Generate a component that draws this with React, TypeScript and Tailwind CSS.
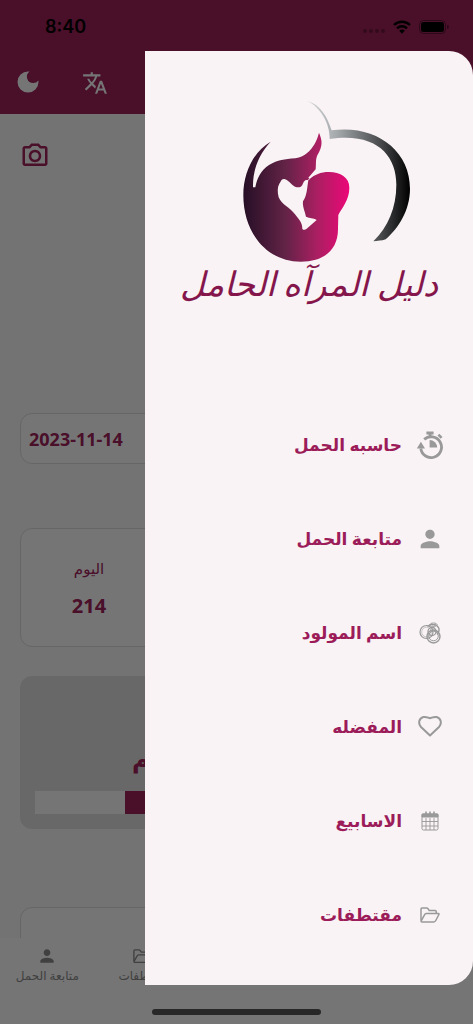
import React from "react";
import {
  MdDarkMode,
  MdOutlinePhotoCamera,
  MdPerson,
  MdTranslate,
} from "react-icons/md";

type IconProps = {
  className?: string;
};

type MenuItem = {
  label: string;
  icon: React.ReactNode;
};

function StopwatchIcon({ className }: IconProps) {
  return (
    <svg viewBox="0 0 26 28" className={className} fill="none" stroke="currentColor">
      <path d="M9.4 2h7.2M13 2v4" strokeWidth="2.8" />
      <path d="M21.4 3.6l3.2 3.2" strokeWidth="2.6" />
      <path d="M7.2 8.4A10.4 10.4 0 1 1 3.8 17.5" strokeWidth="2.8" />
      <path d="M-.2 17.6L3.9 10.8l4.1 6.8z" fill="currentColor" stroke="none" />
      <path d="M12.6 9v7.6h7.6a7.6 7.6 0 0 0-7.6-7.6z" fill="currentColor" stroke="none" />
    </svg>
  );
}

function RingsIcon({ className }: IconProps) {
  return (
    <svg viewBox="0 0 22 22" className={className} fill="none" stroke="currentColor">
      <circle cx="7.5" cy="10" r="6.5" strokeWidth="1.2" />
      <circle cx="7.5" cy="10" r="4.8" strokeWidth=".5" />
      <circle cx="14.5" cy="14.5" r="6.5" strokeWidth="1.4" />
      <circle cx="14.5" cy="14" r="4.8" />
      <path d="M8.5 4.5A7 7 0 0 1 20 6.5a7 7 0 0 1-2 6" strokeWidth="1.3" />
      <circle cx="13" cy="9.5" r="4" strokeWidth="1.3" />
      <path d="M10.5 3l2-2h4l2 2-4 2.5zM12.5 1l2 4 2-4" strokeWidth=".8" />
    </svg>
  );
}

function HeartIcon({ className }: IconProps) {
  return (
    <svg viewBox="0 0 24 24" className={className} fill="none" stroke="currentColor">
      <path
        d="M12 20.5L3 12C-.2 8.5 1 3 5.4 2 8.4 1.4 10.4 3 12 3.2 13.6 3 15.6 1.4 18.6 2 23 3 24.2 8.5 21 12z"
        strokeWidth="2"
        strokeLinejoin="round"
      />
    </svg>
  );
}

function CalendarIcon({ className }: IconProps) {
  return (
    <svg viewBox="0 0 18 20" className={className} fill="none" stroke="currentColor">
      <rect x="1" y="3" width="16" height="16" rx="1.5" />
      <path d="M1 3h16v3H1z" fill="currentColor" />
      <path d="M5 .5v4M9 .5v4M13 .5v4" strokeWidth="1.6" />
      <path d="M5 7v12M9 7v12M13 7v12M1 10.5h16M1 15h16" strokeWidth=".9" />
    </svg>
  );
}

function FolderIcon({ className }: IconProps) {
  return (
    <svg
      viewBox="0 0 20 16"
      className={className}
      fill="none"
      stroke="currentColor"
      strokeWidth="1.5"
      strokeLinejoin="round"
    >
      <path d="M16.2 6.5V4.5q0-1-1-1H9.2L8 1.7Q7.5 1 6.7 1H2Q1 1 1 2v11.5" />
      <path d="M1.2 13.8L4.5 7.8q.6-1.1 1.7-1.2L18.4 6.5q1 .1.5 1L15.8 13.5q-.7 1.3-2 1.4H2q-1.2-.1-.8-1.1z" />
    </svg>
  );
}

function Logo() {
  return (
    <svg viewBox="0 0 870 520" className="w-[290px]" aria-hidden="true">
      <defs>
        <linearGradient id="mother" gradientUnits="userSpaceOnUse" x1="238" y1="0" x2="556" y2="0">
          <stop offset="0" stopColor="#260f26" />
          <stop offset=".4" stopColor="#632347" />
          <stop offset=".7" stopColor="#ab1f62" />
          <stop offset="1" stopColor="#ec0878" />
        </linearGradient>
        <linearGradient id="arc" gradientUnits="userSpaceOnUse" x1="430" y1="0" x2="738" y2="0">
          <stop offset="0" stopColor="#d5d8d9" />
          <stop offset=".3" stopColor="#a2a6a9" />
          <stop offset=".7" stopColor="#4b4d4f" />
          <stop offset="1" stopColor="#000" />
        </linearGradient>
      </defs>
      <path
        fill="url(#mother)"
        d="M320 155C268 184 238 250 238 315C238 430 310 515 410 515C480 515 523 480 522 415L523 375C535 351 556 330 556 293C556 262 529 246 495 246C469 246 452 254 437 267L433 263L455 238C457 222 454 210 460 196C477 166 475 152 465 128C458 157 438 197 394 205C360 208 343 209 315 225C292 239 279 264 274 292L267 292C266 238 286 191 320 155Z"
      />
      <path
        fill="#f9f3f5"
        d="M436 266L431 270C421 268 419 276 415 285C411 294 401 293 393 290C381 284 373 269 361 267C351 266 351 276 346 281C340 291 340 306 344 322C353 344 376 351 393 373C406 389 415 399 415 417C419 421 424 420 428 416L458 390C447 383 438 386 426 380C422 362 415 349 417 334C430 316 429 292 433 271L438 267Z"
      />
      <path
        fill="url(#arc)"
        d="M430 33C474 46 492 88 503 121C632 103 738 178 738 296C738 360 704 414 665 448C653 453 641 452 628 454C672 411 697 353 697 284C697 194 635 126 497 147C498 99 468 51 430 33Z"
      />
    </svg>
  );
}

const menuItems: MenuItem[] = [
  { label: "حاسبه الحمل", icon: <StopwatchIcon className="w-[26px] shrink-0" /> },
  { label: "متابعة الحمل", icon: <MdPerson size={28} className="shrink-0" /> },
  { label: "اسم المولود", icon: <RingsIcon className="w-[22px]" /> },
  { label: "المفضله", icon: <HeartIcon className="w-6" /> },
  { label: "الاسابيع", icon: <CalendarIcon className="w-[18px]" /> },
  { label: "مقتطفات", icon: <FolderIcon className="w-5" /> },
];

const tabs: MenuItem[] = [
  { label: "متابعة الحمل", icon: <MdPerson size={20} /> },
  { label: "مقتطفات", icon: <FolderIcon className="w-[18px]" /> },
];

function StatusBar() {
  return (
    <div className="absolute inset-x-0 top-0 flex h-[53px] items-center justify-between pr-6 pl-[45px] text-black">
      <span className="font-[Inter] text-lg font-semibold">8:40</span>
      <div className="flex items-center gap-2">
        <svg viewBox="0 0 22 4" className="mt-2 w-[22px] opacity-30">
          <circle cx="2" cy="2" r="2" />
          <circle cx="8" cy="2" r="2" />
          <circle cx="14" cy="2" r="2" />
          <circle cx="20" cy="2" r="2" />
        </svg>
        <svg viewBox="0 0 18 14" className="w-[18px]" fill="none" stroke="#000" strokeWidth="2.4">
          <path d="M1 5a11.5 11.5 0 0 1 16 0" />
          <path d="M4 8.3a7.2 7.2 0 0 1 10 0" />
          <path d="M6.2 10.8a4 4 0 0 1 5.6 0L9 13.8z" fill="#000" stroke="none" />
        </svg>
        <svg viewBox="0 0 30 14" className="w-[30px]">
          <rect x=".5" y=".5" width="26" height="13" rx="4" fill="none" stroke="#000" strokeOpacity=".4" />
          <rect x="2" y="2" width="23" height="10" rx="2.5" />
          <path d="M28 5v4a2 2 0 0 0 0-4z" opacity=".4" />
        </svg>
      </div>
    </div>
  );
}

function HomePage() {
  return (
    <div className="flex h-full flex-col overflow-hidden bg-[#fafafa] text-[#a1215b]">
      <header className="flex h-[114px] shrink-0 items-end gap-10 bg-[#a1215b] px-[14px] pb-[18px] text-white">
        <button aria-label="الوضع الليلي">
          <MdDarkMode size={28} />
        </button>
        <button aria-label="اللغة">
          <MdTranslate size={26} />
        </button>
      </header>

      <main className="flex min-h-0 flex-1 flex-col overflow-hidden px-5">
        <button aria-label="صورة" className="mt-[27px] self-start">
          <MdOutlinePhotoCamera size={30} />
        </button>

        <div className="mt-[242px] flex h-[51px] shrink-0 items-center rounded-xl border border-[#dedede] bg-white px-2 text-lg font-bold">
          2023-11-14
        </div>

        <div className="mt-16 h-[119px] shrink-0 rounded-xl border border-[#dedede] bg-white">
          <div className="flex h-full w-[136px] flex-col items-center justify-center gap-4">
            <span className="text-[15px] leading-5">اليوم</span>
            <span className="text-xl leading-6 font-bold">214</span>
          </div>
        </div>

        <div className="mt-[29px] flex h-[153px] shrink-0 flex-col justify-end rounded-xl bg-[#e3e3e3] px-[15px] pb-[15px]">
          <p className="mb-4 pl-[97px] text-2xl leading-8 font-bold">يوم</p>
          <div className="flex h-[23px] justify-end bg-white">
            <div className="w-7/9 bg-[#a1215b]" />
          </div>
        </div>

        <div className="mt-[78px] h-[119px] shrink-0 rounded-xl border border-[#dedede] bg-white" />
      </main>

      <nav className="flex h-[86px] shrink-0 bg-white pt-2 text-[#8c8c8c]">
        {tabs.map((tab) => (
          <a key={tab.label} href="#" className="flex w-1/5 flex-col items-center">
            <span className="flex h-5 items-center">{tab.icon}</span>
            <span className="text-xs leading-5 whitespace-nowrap">{tab.label}</span>
          </a>
        ))}
      </nav>
    </div>
  );
}

function Drawer() {
  return (
    <aside
      dir="rtl"
      className="absolute top-[51px] right-0 bottom-[39px] left-[145px] overflow-hidden rounded-r-3xl bg-[#f9f3f5]"
    >
      <div className="flex h-[347px] flex-col items-center pt-[39px]">
        <Logo />
        <p className="text-[34px] leading-10 whitespace-nowrap text-[#84164c] italic">
          دليل المرآه الحامل
        </p>
      </div>
      <ul>
        {menuItems.map((item) => (
          <li key={item.label}>
            <a href="#" className="flex h-[94px] items-center gap-4 pr-[31px] text-[#9c1c5a]">
              <span className="flex w-6 justify-center text-[#999]">{item.icon}</span>
              <span className="text-[17px] leading-6 font-bold">{item.label}</span>
            </a>
          </li>
        ))}
      </ul>
    </aside>
  );
}

export default function App() {
  return (
    <div className="relative h-screen overflow-hidden font-['Noto_Sans','DejaVu_Sans',sans-serif]">
      <HomePage />
      <div className="absolute inset-0 bg-black/54" />
      <StatusBar />
      <Drawer />
      <div className="absolute inset-x-0 bottom-[9px] mx-auto h-[6px] w-[169px] rounded-full bg-[#282828]" />
    </div>
  );
}
